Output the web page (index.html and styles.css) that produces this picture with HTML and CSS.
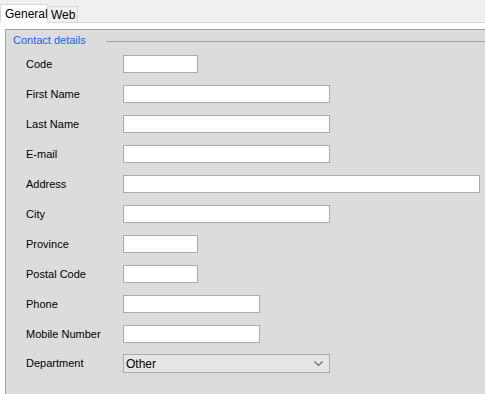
FILE: index.html
```html
<!DOCTYPE html>
<html>
<head>
    <title>Contact</title>
    <link rel="stylesheet" href="styles.css">
</head>
<body>
    <div class="tabs">
        <div class="tab active">General</div>
        <div class="tab">Web</div>
        <div class="tab-rest"></div>
    </div>
    <div class="tab-page">
        <div class="panel">
            <div class="group-head">
                <span class="legend">Contact details</span>
                <span class="group-line"></span>
            </div>
            <form class="form">
                <label for="code">Code</label>
                <input type="text" id="code" class="w-s">

                <label for="first">First Name</label>
                <input type="text" id="first" class="w-m">

                <label for="last">Last Name</label>
                <input type="text" id="last" class="w-m">

                <label for="email">E-mail</label>
                <input type="text" id="email" class="w-m">

                <label for="address">Address</label>
                <input type="text" id="address" class="w-l">

                <label for="city">City</label>
                <input type="text" id="city" class="w-m">

                <label for="province">Province</label>
                <input type="text" id="province" class="w-s">

                <label for="postal">Postal Code</label>
                <input type="text" id="postal" class="w-s">

                <label for="phone">Phone</label>
                <input type="text" id="phone" class="w-p">

                <label for="mobile">Mobile Number</label>
                <input type="text" id="mobile" class="w-p">

                <label class="dept-label">Department</label>
                <div class="select w-m">
                    <span>Other</span>
                    <svg width="9" height="5" viewBox="0 0 9 5"><path d="M0.5 0.5 L4.5 4.5 L8.5 0.5" fill="none" stroke="#666" stroke-width="1.1"/></svg>
                </div>
            </form>
        </div>
    </div>
</body>
</html>
```

FILE: styles.css
```css
html, body {
    height: 100%;
}
body {
    margin: 0;
    font-family: "Liberation Sans", Arial, sans-serif;
    font-size: 11px;
    color: #000;
    background-color: #f0f0f0;
    display: flex;
    flex-direction: column;
    overflow: hidden;
}
.tabs {
    display: flex;
    align-items: flex-end;
    height: 23px;
}
.tab {
    box-sizing: border-box;
    height: 17px;
    padding: 0 2px 0 3px;
    line-height: 16px;
    font-size: 12px;
    border: 1px solid #d9d9d9;
    background-color: #f0f0f0;
}
.tab + .tab {
    border-left: none;
}
.tab.active {
    height: 19px;
    width: 48px;
    line-height: 18px;
    padding-left: 4px;
    background-color: #fff;
    border-bottom-color: #fff;
}
.tab-rest {
    flex: 1;
    border-bottom: 1px solid #d9d9d9;
}
.tab-page {
    flex: 1;
    background-color: #fff;
    padding: 6px 0 0 5px;
    display: flex;
}
.panel {
    flex: 1;
    background-color: #dcdcdc;
    border-top: 1px solid #a0a0a0;
    border-left: 1px solid #a0a0a0;
}
.group-head {
    display: flex;
    align-items: center;
    height: 13px;
    margin: 3px 0 9px 7px;
}
.legend {
    color: #1064f0;
}
.group-line {
    flex: 1;
    margin-left: 20px;
    margin-top: 3px;
    border-top: 1px solid #a0a0a0;
}
.form {
    display: grid;
    grid-template-columns: 97px 1fr;
    grid-auto-rows: 18px;
    row-gap: 12px;
    padding-left: 20px;
    align-items: center;
}
.form label {
    line-height: 13px;
}
.form input {
    box-sizing: border-box;
    height: 18px;
    margin: 0;
    padding: 1px 2px;
    border: 1px solid #ababab;
    background-color: #fff;
    font: inherit;
    outline: none;
}
.dept-label {
    margin-top: -2px;
}
.w-s {
    width: 75px;
}
.w-m {
    width: 207px;
}
.w-p {
    width: 137px;
}
.w-l {
    width: 357px;
}
.select {
    box-sizing: border-box;
    height: 19px;
    margin-top: -1px;
    border: 1px solid #acacac;
    background-color: #e5e5e5;
    display: flex;
    align-items: center;
    justify-content: space-between;
    padding: 0 6px 0 2px;
    font-size: 12px;
}
```
